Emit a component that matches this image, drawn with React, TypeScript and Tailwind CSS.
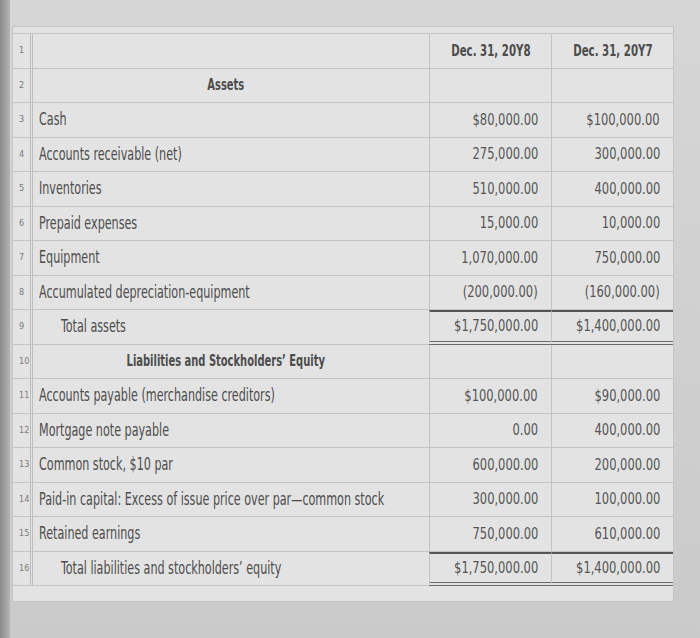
import type { ReactNode } from 'react'

type Row = {
  n: number
  label?: string
  kind?: 'head' | 'center' | 'bold' | 'total'
  a?: string
  b?: string
  topRule?: boolean
  bottomRule?: boolean
}

const rows: Row[] = [
  { n: 1, kind: 'head', a: 'Dec. 31, 20Y8', b: 'Dec. 31, 20Y7' },
  { n: 2, label: 'Assets', kind: 'center' },
  { n: 3, label: 'Cash', a: '$80,000.00', b: '$100,000.00' },
  { n: 4, label: 'Accounts receivable (net)', a: '275,000.00', b: '300,000.00' },
  { n: 5, label: 'Inventories', a: '510,000.00', b: '400,000.00' },
  { n: 6, label: 'Prepaid expenses', a: '15,000.00', b: '10,000.00' },
  { n: 7, label: 'Equipment', a: '1,070,000.00', b: '750,000.00' },
  { n: 8, label: 'Accumulated depreciation-equipment', a: '(200,000.00)', b: '(160,000.00)' },
  { n: 9, label: 'Total assets', kind: 'total', a: '$1,750,000.00', b: '$1,400,000.00', topRule: true, bottomRule: true },
  { n: 10, label: 'Liabilities and Stockholders’ Equity', kind: 'bold' },
  { n: 11, label: 'Accounts payable (merchandise creditors)', a: '$100,000.00', b: '$90,000.00' },
  { n: 12, label: 'Mortgage note payable', a: '0.00', b: '400,000.00' },
  { n: 13, label: 'Common stock, $10 par', a: '600,000.00', b: '200,000.00' },
  { n: 14, label: 'Paid-in capital: Excess of issue price over par—common stock', a: '300,000.00', b: '100,000.00' },
  { n: 15, label: 'Retained earnings', a: '750,000.00', b: '610,000.00' },
  { n: 16, label: 'Total liabilities and stockholders’ equity', kind: 'total', a: '$1,750,000.00', b: '$1,400,000.00', topRule: true, bottomRule: true },
]

function ValueCell({ children, row }: { children?: ReactNode; row: Row }) {
  const top = row.topRule ? 'border-t-2 border-t-[#555]' : ''
  const bottom = row.bottomRule ? 'border-b-[4px] border-double border-b-[#6a6a6a]' : 'border-b border-b-[#c4c4c4]'
  return (
    <div className={`flex items-center justify-end border-l border-l-[#c4c4c4] pr-[13px] ${top} ${bottom}`}>
      <span className="inline-block origin-right scale-x-[0.8] whitespace-nowrap text-[16px] text-[#555]">{children}</span>
    </div>
  )
}

function LabelCell({ row }: { row: Row }) {
  if (row.kind === 'center' || row.kind === 'bold') {
    return (
      <div className="flex items-center justify-center border-b border-[#c4c4c4] pr-[10px]">
        <span className="inline-block origin-center scale-x-[0.69] whitespace-nowrap text-[16px] font-bold">{row.label}</span>
      </div>
    )
  }
  return (
    <div className={`flex items-center border-b border-[#c4c4c4] ${row.kind === 'total' ? 'pl-[28px]' : 'pl-[6px]'}`}>
      <span className="inline-block origin-left scale-x-[0.73] whitespace-nowrap text-[17px]">{row.label}</span>
    </div>
  )
}

export default function App() {
  return (
    <div
      className="relative h-[638px] w-[700px] overflow-hidden bg-[#d3d3d3] text-[#4d4d4d]"
      style={{ fontFamily: '"Liberation Sans Narrow", "DejaVu Sans Condensed", "Liberation Sans", sans-serif' }}
    >
      <div className="flex h-full">
        <div className="w-[10px] shrink-0 bg-gradient-to-r from-[#8a8a8a] to-[#b5b5b5]" />
        <div className="flex flex-1 flex-col bg-gradient-to-b from-[#d6d6d6] to-[#cacaca] pt-[26px]">
          <div className="ml-[2px] w-[662px] border border-[#c6c6c6] bg-[#e3e3e3] pb-[15px] pt-[6px]">
            <div className="grid grid-cols-[20px_396px_122px_122px] grid-rows-[repeat(16,34.5px)] border-t border-[#c4c4c4]">
              {rows.map((row) => (
                <div key={row.n} className="contents">
                  <div className="flex items-center border-b border-r-[3px] border-double border-b-[#c4c4c4] border-r-[#bdbdbd] pl-[6px] text-[9px] text-[#7a7a7a]">
                    {row.n}
                  </div>
                  {row.kind === 'head' ? (
                    <>
                      <div className="border-b border-[#c4c4c4]" />
                      <div className="flex items-center justify-center border-b border-l border-[#c4c4c4]">
                        <span className="inline-block origin-center scale-x-[0.71] whitespace-nowrap text-[16px] font-bold">{row.a}</span>
                      </div>
                      <div className="flex items-center justify-center border-b border-l border-[#c4c4c4]">
                        <span className="inline-block origin-center scale-x-[0.71] whitespace-nowrap text-[16px] font-bold">{row.b}</span>
                      </div>
                    </>
                  ) : (
                    <>
                      <LabelCell row={row} />
                      <ValueCell row={row}>{row.a}</ValueCell>
                      <ValueCell row={row}>{row.b}</ValueCell>
                    </>
                  )}
                </div>
              ))}
            </div>
          </div>
          <div className="flex-1" />
        </div>
      </div>
    </div>
  )
}
